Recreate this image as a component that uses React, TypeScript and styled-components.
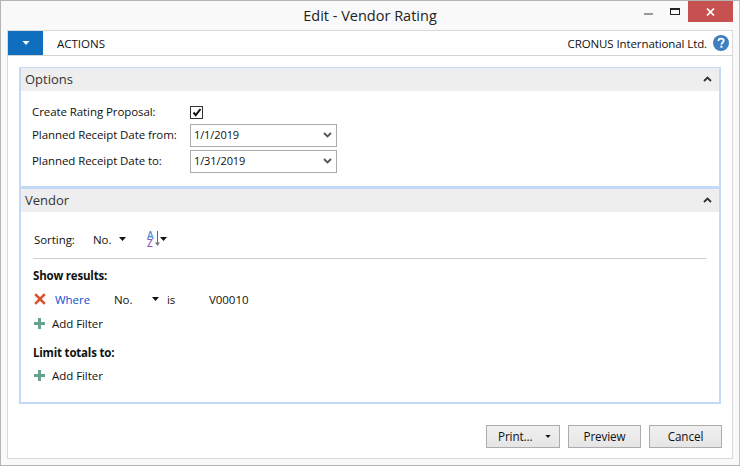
import React from "react";
import styled, { createGlobalStyle } from "styled-components";

const GlobalStyle = createGlobalStyle`
  html, body {
    margin: 0;
    padding: 0;
    background: #f9f9f9;
  }
  body {
    font-family: "Open Sans", "Noto Sans", "Liberation Sans", sans-serif;
    font-size: 11.5px;
    color: #111;
  }
`;

const Frame = styled.div`
  width: 740px;
  height: 466px;
  box-sizing: border-box;
  border: 1px solid #b5b5b5;
  border-right-color: #c4c4c4;
  background: #f9f9f9;
  display: flex;
  flex-direction: column;
  padding: 0 6px 6px 6px;
`;

const TitleBar = styled.div`
  height: 29px;
  flex: none;
  position: relative;
  display: flex;
  align-items: center;
  justify-content: center;
  font-size: 14.5px;
  color: #222;
  padding-bottom: 1px;
  box-sizing: border-box;
`;

const WindowButtons = styled.div`
  position: absolute;
  top: 0;
  right: 0;
  display: flex;
`;

const WinButton = styled.div<{ $width: number; $close?: boolean }>`
  width: ${(p) => p.$width}px;
  height: 21px;
  display: flex;
  align-items: center;
  justify-content: ${(p) => (p.$close ? "center" : "flex-start")};
  background: ${(p) => (p.$close ? "#c75050" : "transparent")};
`;

const Shell = styled.div`
  flex: 1;
  background: #fff;
  border: 1px solid #d9d9d9;
  display: flex;
  flex-direction: column;
  min-height: 0;
`;

const Ribbon = styled.div`
  height: 24px;
  flex: none;
  border-bottom: 1px solid #d4d4d4;
  display: flex;
  align-items: center;
  padding-right: 3px;
`;

const AppTab = styled.div`
  width: 35px;
  height: 24px;
  background: #106ebe;
  display: flex;
  align-items: center;
  justify-content: center;
`;

const RibbonTab = styled.div`
  font-size: 11.5px;
  margin-left: 14px;
`;

const Company = styled.div`
  margin-left: auto;
  font-size: 11.5px;
  letter-spacing: -0.1px;
  margin-right: 6px;
`;

const Content = styled.div`
  flex: 1;
  display: flex;
  flex-direction: column;
  padding: 11px 11px 0 11px;
`;

const Section = styled.section<{ $height: number }>`
  height: ${(p) => p.$height}px;
  box-sizing: border-box;
  border-style: solid;
  border-width: 1px 2px 2px 2px;
  border-color: #c3d9f5;
  display: flex;
  flex-direction: column;
  flex: none;
`;

const SectionHead = styled.div`
  height: 23px;
  flex: none;
  box-sizing: border-box;
  background: #eeeeee;
  display: flex;
  align-items: center;
  justify-content: space-between;
  padding: 0 7px 1px 4px;
  font-size: 13px;
  color: #333;
`;

const OptionsBody = styled.div`
  padding: 13px 0 0 11px;
  display: grid;
  grid-template-columns: 158px 147px;
  grid-template-rows: 17px 23px 23px;
  row-gap: 3px;
  align-items: center;
`;

const FieldLabel = styled.div`
  font-size: 11.5px;
  letter-spacing: -0.08px;
  padding-bottom: 2px;
`;

const CheckBox = styled.div`
  width: 11px;
  height: 11px;
  border: 1px solid #333;
  display: flex;
  align-items: center;
  justify-content: center;
`;

const DateInput = styled.div`
  height: 23px;
  box-sizing: border-box;
  border: 1px solid #aaaaaa;
  display: flex;
  align-items: center;
  justify-content: space-between;
  padding: 0 4px 2px 3px;
  font-size: 11px;
  letter-spacing: -0.1px;
`;

const VendorBody = styled.div`
  flex: 1;
  padding: 0 12px;
  display: flex;
  flex-direction: column;
`;

const SortRow = styled.div`
  height: 47px;
  flex: none;
  box-sizing: border-box;
  border-bottom: 1px solid #d0d0d0;
  display: flex;
  align-items: center;
  font-size: 11.5px;
  letter-spacing: -0.05px;
  padding: 8px 0 0 1px;
`;

const SortLabel = styled.span`
  width: 59px;
`;

const SortValue = styled.span`
  width: 26px;
`;

const SortIcon = styled.span`
  display: flex;
  align-items: center;
  margin-left: 21px;
`;

const SortLetters = styled.span`
  display: flex;
  flex-direction: column;
  width: 8px;
`;

const SortLetter = styled.span<{ $color: string }>`
  color: ${(p) => p.$color};
  font-size: 10px;
  font-weight: 600;
  line-height: 8.5px;
  height: 8.5px;
`;

const GroupTitle = styled.div<{ $top: number }>`
  font-size: 11.5px;
  font-weight: 700;
  letter-spacing: -0.2px;
  margin-top: ${(p) => p.$top}px;
  line-height: 15px;
`;

const FilterRow = styled.div<{ $top: number }>`
  display: flex;
  align-items: center;
  height: 16px;
  margin-top: ${(p) => p.$top}px;
  padding-left: 1px;
  font-size: 11.5px;
  letter-spacing: -0.05px;
`;

const WhereLink = styled.span`
  color: #0e4fd1;
  margin-left: 9px;
  width: 59px;
`;

const FilterField = styled.span`
  width: 38px;
`;

const IsText = styled.span`
  margin-left: 8px;
  width: 42px;
`;

const AddText = styled.span`
  margin-left: 7px;
`;

const Footer = styled.div`
  flex: 1;
  display: flex;
  justify-content: flex-end;
  gap: 8px;
  padding-top: 21px;
  margin-right: -1px;
`;

const Button = styled.div<{ $split?: boolean }>`
  width: ${(p) => (p.$split ? 74 : 73)}px;
  height: 23px;
  box-sizing: border-box;
  border: 1px solid #acacac;
  background: linear-gradient(#f0f0f0, #e5e5e5);
  display: flex;
  align-items: center;
  justify-content: ${(p) => (p.$split ? "space-between" : "center")};
  padding: ${(p) => (p.$split ? "0 8px 1px 11px" : "0 0 1px 0")};
  font-size: 11.7px;
  letter-spacing: -0.1px;
`;

const Caret = ({ w = 7, h = 4, color = "#111" }: { w?: number; h?: number; color?: string }) => (
  <svg width={w} height={h} viewBox="0 0 7 4">
    <path d="M0 0h7L3.5 4z" fill={color} />
  </svg>
);

const Chevron = ({ up }: { up?: boolean }) => (
  <svg width="9" height="6" viewBox="0 0 9 6">
    <path d={up ? "M1 5l3.5-3.5L8 5" : "M1 1l3.5 3.5L8 1"} fill="none" stroke={up ? "#333" : "#555"} strokeWidth="1.8" />
  </svg>
);

const PlusIcon = () => (
  <svg width="11" height="11" viewBox="0 0 11 11">
    <path d="M4 0h3v4h4v3H7v4H4V7H0V4h4z" fill="#66a38c" />
  </svg>
);

const DeleteIcon = () => (
  <svg width="12" height="12" viewBox="0 0 12 12">
    <path d="M1.2 1.2l9.6 9.6M10.8 1.2l-9.6 9.6" stroke="#d9512c" strokeWidth="2.6" fill="none" />
  </svg>
);

const SortArrow = () => (
  <svg width="5" height="17" viewBox="0 0 5 17">
    <path d="M2.5 0v13" stroke="#666" strokeWidth="1" fill="none" />
    <path d="M0 11.5l2.5 3.5 2.5-3.5z" fill="#777" />
  </svg>
);

const HelpIcon = () => (
  <svg width="16" height="16" viewBox="0 0 16 16">
    <circle cx="8" cy="8" r="8" fill="#3f7fc0" />
    <path d="M5.4 6.1c0-1.6 1.2-2.5 2.7-2.5s2.6.9 2.6 2.2c0 1.9-2.3 1.9-2.3 3.6" fill="none" stroke="#fff" strokeWidth="1.8" />
    <rect x="7.4" y="10.7" width="2" height="2" fill="#fff" />
  </svg>
);

const App: React.FC = () => {
  return (
    <Frame>
      <GlobalStyle />
      <TitleBar>
        Edit - Vendor Rating
        <WindowButtons>
          <WinButton $width={26}>
            <svg width="9" height="21" viewBox="0 0 9 21"><rect y="12" width="9" height="2" fill="#9a9a9a" /></svg>
          </WinButton>
          <WinButton $width={18}>
            <svg width="10" height="21" viewBox="0 0 10 21">
              <rect x="0.5" y="7.5" width="9" height="6" fill="none" stroke="#222" strokeWidth="1" />
              <rect y="7" width="10" height="2" fill="#222" />
            </svg>
          </WinButton>
          <WinButton $width={45} $close>
            <svg width="9" height="8" viewBox="0 0 9 8">
              <path d="M1 .5l7 7M8 .5l-7 7" stroke="#fff" strokeWidth="1.7" fill="none" />
            </svg>
          </WinButton>
        </WindowButtons>
      </TitleBar>
      <Shell>
        <Ribbon>
          <AppTab><Caret w={8} h={4} color="#fff" /></AppTab>
          <RibbonTab>ACTIONS</RibbonTab>
          <Company>CRONUS International Ltd.</Company>
          <HelpIcon />
        </Ribbon>
        <Content>
          <Section $height={121}>
            <SectionHead>Options<Chevron up /></SectionHead>
            <OptionsBody>
              <FieldLabel>Create Rating Proposal:</FieldLabel>
              <CheckBox>
                <svg width="10" height="9" viewBox="0 0 10 9">
                  <path d="M1.5 4.5l2.3 2.7L8.5 1" fill="none" stroke="#111" strokeWidth="2" />
                </svg>
              </CheckBox>
              <FieldLabel>Planned Receipt Date from:</FieldLabel>
              <DateInput>1/1/2019<Chevron /></DateInput>
              <FieldLabel>Planned Receipt Date to:</FieldLabel>
              <DateInput>1/31/2019<Chevron /></DateInput>
            </OptionsBody>
          </Section>
          <Section $height={216}>
            <SectionHead>Vendor<Chevron up /></SectionHead>
            <VendorBody>
              <SortRow>
                <SortLabel>Sorting:</SortLabel>
                <SortValue>No.</SortValue>
                <Caret />
                <SortIcon>
                  <SortLetters>
                    <SortLetter $color="#4a8fd0">A</SortLetter>
                    <SortLetter $color="#8e5bb5">Z</SortLetter>
                  </SortLetters>
                  <SortArrow />
                  <Caret />
                </SortIcon>
              </SortRow>
              <GroupTitle $top={9}>Show results:</GroupTitle>
              <FilterRow $top={8}>
                <DeleteIcon />
                <WhereLink>Where</WhereLink>
                <FilterField>No.</FilterField>
                <Caret />
                <IsText>is</IsText>
                <span>V00010</span>
              </FilterRow>
              <FilterRow $top={8}>
                <PlusIcon />
                <AddText>Add Filter</AddText>
              </FilterRow>
              <GroupTitle $top={14}>Limit totals to:</GroupTitle>
              <FilterRow $top={7}>
                <PlusIcon />
                <AddText>Add Filter</AddText>
              </FilterRow>
            </VendorBody>
          </Section>
          <Footer>
            <Button $split>Print...<Caret w={6} h={3} /></Button>
            <Button>Preview</Button>
            <Button>Cancel</Button>
          </Footer>
        </Content>
      </Shell>
    </Frame>
  );
};

export default App;
